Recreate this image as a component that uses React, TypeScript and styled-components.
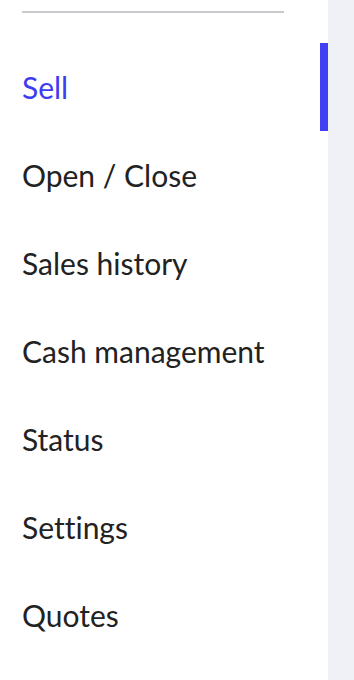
import * as React from 'react';
import styled, { createGlobalStyle } from 'styled-components';

const Global = createGlobalStyle`
  html, body {
    margin: 0;
    padding: 0;
    background: #f0f1f7;
  }
`;

const Page = styled.div`
  display: flex;
  width: 354px;
  height: 680px;
  background-color: #f0f1f7;
`;

const Sidebar = styled.nav`
  width: 328px;
  height: 100%;
  background-color: #ffffff;
  display: flex;
  flex-direction: column;
`;

const Divider = styled.div`
  margin: 11px 44px 0 22px;
  height: 2px;
  background-color: #c9c9ce;
`;

const MenuList = styled.ul`
  list-style: none;
  margin: 30px 0 0;
  padding: 0;
`;

const MenuItem = styled.li<{ $active?: boolean }>`
  position: relative;
  height: 88px;
  display: flex;
  align-items: center;
  padding-left: 22px;
  padding-bottom: 1px;
  box-sizing: border-box;
  font-family: Lato, "Open Sans", sans-serif;
  font-size: 30px;
  font-variant-ligatures: none;
  color: ${(p) => (p.$active ? '#3d3cf0' : '#222222')};

  &::after {
    content: '';
    display: ${(p) => (p.$active ? 'block' : 'none')};
    position: absolute;
    right: 0;
    top: 0;
    width: 8px;
    height: 88px;
    background-color: #4141f3;
  }
`;

const items = ['Sell', 'Open / Close', 'Sales history', 'Cash management', 'Status', 'Settings', 'Quotes'];

export default function App() {
  return (
    <>
      <Global />
      <Page>
        <Sidebar>
          <Divider />
          <MenuList>
            {items.map((label, i) => (
              <MenuItem key={label} $active={i === 0}>
                {label}
              </MenuItem>
            ))}
          </MenuList>
        </Sidebar>
      </Page>
    </>
  );
}
